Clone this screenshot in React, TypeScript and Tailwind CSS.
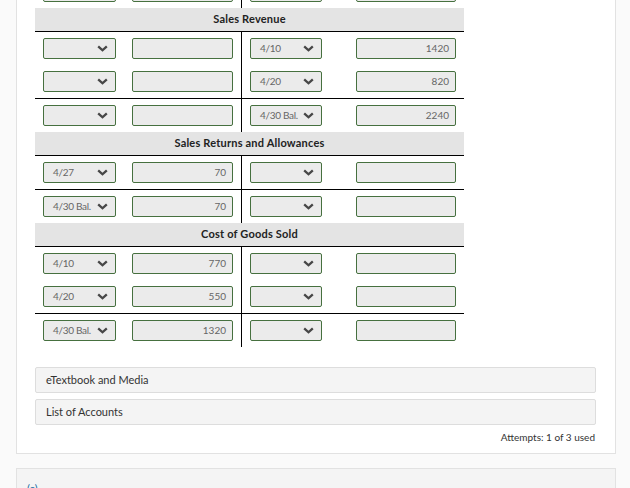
import React from 'react';

type Row = {
  d1?: string;
  a1?: string;
  d2?: string;
  a2?: string;
  line?: boolean;
};

type Section = {
  title: string;
  rows: Row[];
};

const sections: Section[] = [
  {
    title: 'Sales Revenue',
    rows: [
      { d2: '4/10', a2: '1420' },
      { d2: '4/20', a2: '820' },
      { d2: '4/30 Bal.', a2: '2240', line: true },
    ],
  },
  {
    title: 'Sales Returns and Allowances',
    rows: [
      { d1: '4/27', a1: '70' },
      { d1: '4/30 Bal.', a1: '70', line: true },
    ],
  },
  {
    title: 'Cost of Goods Sold',
    rows: [
      { d1: '4/10', a1: '770' },
      { d1: '4/20', a1: '550' },
      { d1: '4/30 Bal.', a1: '1320', line: true },
    ],
  },
];

function Chevron() {
  return (
    <svg width="11" height="7" viewBox="0 0 11 7" className="shrink-0">
      <polyline points="1.2,1.3 5.5,5.3 9.8,1.3" fill="none" stroke="#474747" strokeWidth="2.3" />
    </svg>
  );
}

function DateSelect({ value, w }: { value?: string; w: string }) {
  return (
    <div className={`${w} h-[21px] flex items-center justify-between pl-[9px] pr-[7px] border border-[#46703f] rounded-[2px] bg-[#ebebeb] text-[10px] text-[#666] tracking-[-0.3px]`}>
      <span>{value ?? ''}</span>
      <Chevron />
    </div>
  );
}

function Amount({ value, w }: { value?: string; w: string }) {
  return (
    <div className={`${w} h-[21px] flex items-center justify-end pr-[6px] border border-[#46703f] rounded-[2px] bg-[#ebebeb] text-[10px] text-[#666]`}>
      {value ?? ''}
    </div>
  );
}

function TRow({ row }: { row: Row }) {
  return (
    <div className={`flex ${row.line ? 'border-t border-black' : ''}`}>
      <div className="w-[207px] h-[33px] flex items-center pl-[8px] border-r border-black">
        <DateSelect value={row.d1} w="w-[73px]" />
        <div className="ml-[16px]">
          <Amount value={row.a1} w="w-[101px]" />
        </div>
      </div>
      <div className="w-[222px] h-[33px] flex items-center pl-[8px]">
        <DateSelect value={row.d2} w="w-[72px]" />
        <div className="ml-[34px]">
          <Amount value={row.a2} w="w-[100px]" />
        </div>
      </div>
    </div>
  );
}

export default function App() {
  return (
    <div className="w-[630px] h-[488px] overflow-hidden bg-[#fafafa] pl-4 pr-[14px] font-['Lato','Liberation_Sans',sans-serif]">
      <div className="-mt-[25px] bg-white border border-[#e2e2e2] border-t-0 pl-[18px] pr-[19px] pb-[8px]">
        {/* Table of T-accounts */}
        <div className="w-[429px]">
          <TRow row={{}} />
          {sections.map(s => (
            <div key={s.title}>
              <div className="h-[24px] bg-[#e4e4e4] border-b border-black flex items-center justify-center text-[11px] font-bold tracking-[0.2px] text-[#222]">
                {s.title}
              </div>
              {s.rows.map((r, i) => (
                <TRow key={i} row={r} />
              ))}
            </div>
          ))}
        </div>

        <div className="mt-[20px] flex flex-col gap-[6px]">
          <div className="h-[26px] flex items-center px-[10px] bg-[#f4f4f4] border border-[#dddddd] rounded-[2px] text-[11px] text-[#333]">
            eTextbook and Media
          </div>
          <div className="h-[26px] flex items-center px-[10px] bg-[#f4f4f4] border border-[#dddddd] rounded-[2px] text-[11px] text-[#333]">
            List of Accounts
          </div>
        </div>
        <div className="mt-[5px] text-right text-[10px] text-[#333] pr-[1px]">Attempts: 1 of 3 used</div>
      </div>

      <div className="mt-[14px] h-[40px] bg-[#f4f4f4] border border-[#e2e2e2] px-[10px] pt-[12px] text-[11px] text-[#1d6fa5]">
        (c)
      </div>
    </div>
  );
}
